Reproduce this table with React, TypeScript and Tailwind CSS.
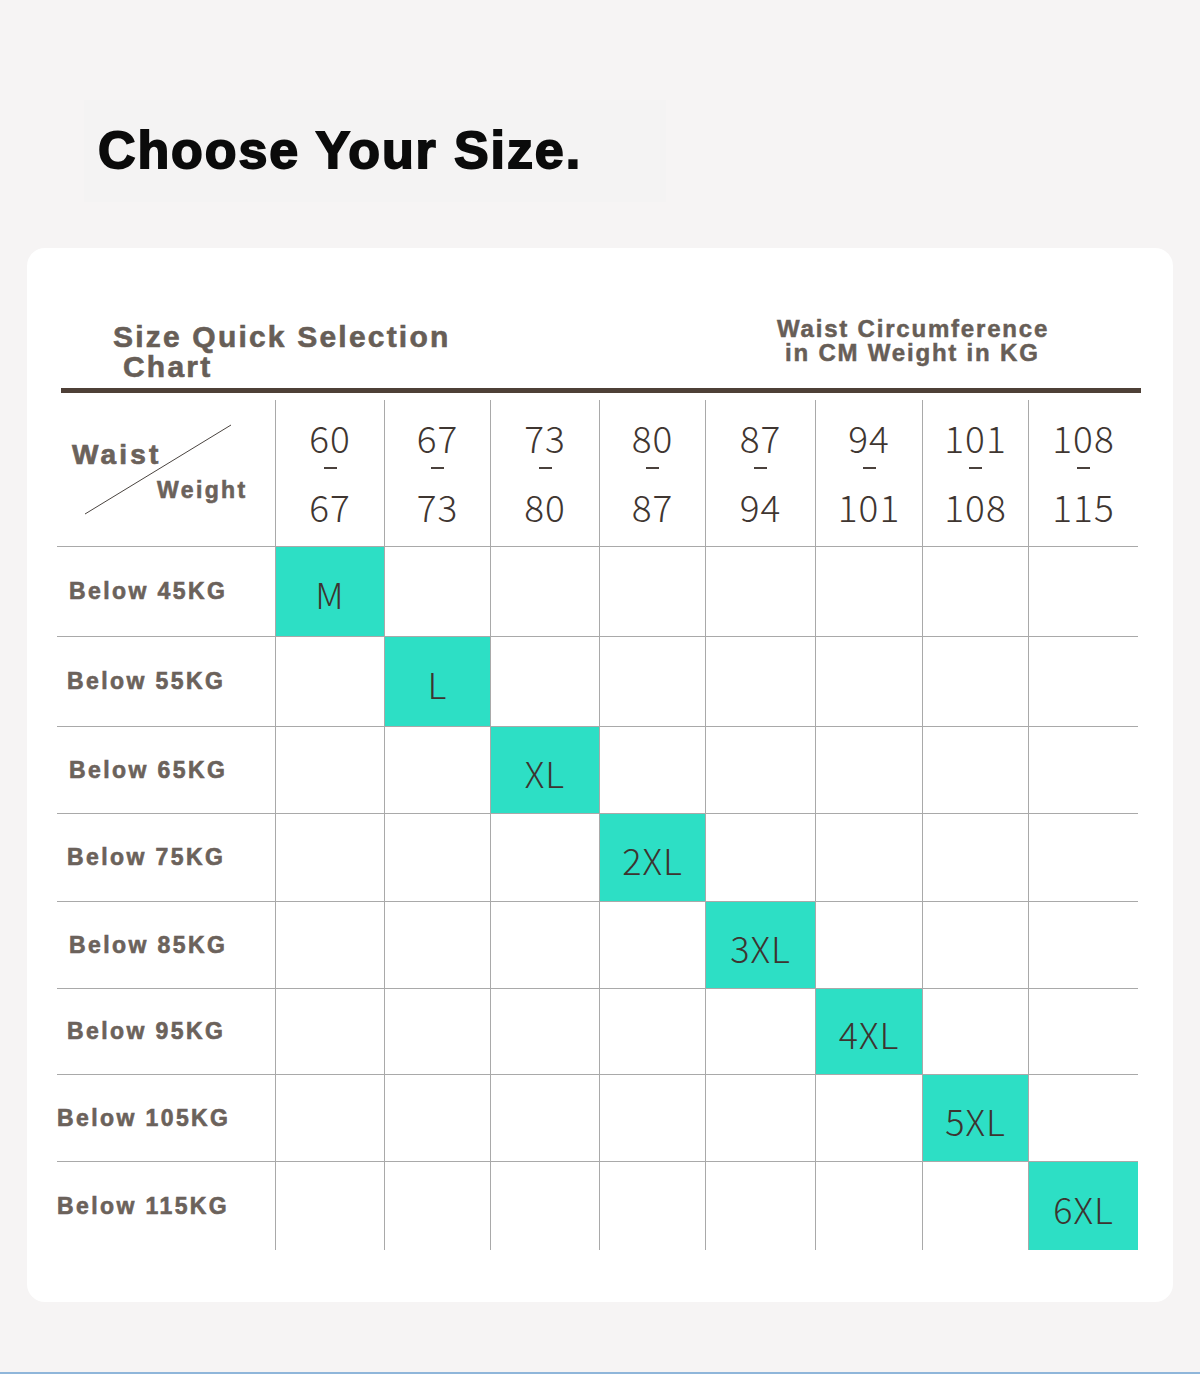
const cols = [
  { top: '60', bottom: '67' },
  { top: '67', bottom: '73' },
  { top: '73', bottom: '80' },
  { top: '80', bottom: '87' },
  { top: '87', bottom: '94' },
  { top: '94', bottom: '101' },
  { top: '101', bottom: '108' },
  { top: '108', bottom: '115' },
]

const rows = [
  { label: 'Below 45KG', size: 'M', h: 'h-[90px]', pl: 'pl-[12px]' },
  { label: 'Below 55KG', size: 'L', h: 'h-[90px]', pl: 'pl-[10px]' },
  { label: 'Below 65KG', size: 'XL', h: 'h-[87px]', pl: 'pl-[12px]' },
  { label: 'Below 75KG', size: '2XL', h: 'h-[88px]', pl: 'pl-[10px]' },
  { label: 'Below 85KG', size: '3XL', h: 'h-[87px]', pl: 'pl-[12px]' },
  { label: 'Below 95KG', size: '4XL', h: 'h-[86px]', pl: 'pl-[10px]' },
  { label: 'Below 105KG', size: '5XL', h: 'h-[87px]', pl: 'pl-0' },
  { label: 'Below 115KG', size: '6XL', h: 'h-[89px]', pl: 'pl-0' },
]

const colW = ['w-[109px]', 'w-[106px]', 'w-[109px]', 'w-[106px]', 'w-[110px]', 'w-[107px]', 'w-[106px]', 'w-[110px]']

const arial = "font-['Liberation_Sans',Arial,sans-serif]"
const thin = "font-['Noto_Sans_CJK_SC','Noto_Sans',sans-serif]"

export default function App() {
  return (
    <div className="h-[1374px] bg-[#f6f4f4] flex flex-col">
      <div className="pt-[100px] pl-[84px]">
        <div className="w-[582px] h-[102px] bg-[#f4f3f3] pl-[14px] pt-[24px]">
          <h1
            className={`${arial} text-[52px] leading-none font-bold tracking-[1.9px] text-[#0b0b0b] [-webkit-text-stroke:1.8px_#0b0b0b]`}
          >
            Choose Your Size.
          </h1>
        </div>
      </div>

      <div className="mt-[46px] ml-[27px] w-[1146px] h-[1054px] bg-white rounded-[18px]">
        {/* header */}
        <div className="pl-[34px]">
          <div className="flex items-start pt-[69px] pl-[52px]">
            <div
              className={`${arial} w-[664px] mt-[5px] text-[30px] leading-[30px] font-bold tracking-[2.2px] text-[#675e57] [-webkit-text-stroke:0.6px_#675e57]`}
            >
              <div>Size Quick Selection</div>
              <div className="pl-[10px]">Chart</div>
            </div>
            <div
              className={`${arial} text-[24px] leading-[24px] font-bold tracking-[1.8px] text-[#675e57] [-webkit-text-stroke:0.5px_#675e57]`}
            >
              <div>Waist Circumference</div>
              <div className="pl-[8px]">in CM Weight in KG</div>
            </div>
          </div>
          <div className="mt-[6px] w-[1080px] h-[5px] bg-[#4e4037]" />
        </div>

        {/* table */}
        <div className="ml-[30px] mt-[7px]">
          <div className="flex h-[146px]">
            <div className="w-[218px] relative pt-[41px]">
              <svg className="absolute left-0 top-0" width="218" height="146">
                <line x1="28" y1="114" x2="174" y2="25" stroke="#4a4440" strokeWidth="1" />
              </svg>
              <div
                className={`${arial} relative pl-[15px] text-[28px] leading-none font-bold tracking-[3.2px] text-[#6b625b] [-webkit-text-stroke:0.7px_#6b625b]`}
              >
                Waist
              </div>
              <div
                className={`${arial} relative mt-[10px] pl-[100px] text-[23px] leading-none font-bold tracking-[2.4px] text-[#6b625b] [-webkit-text-stroke:0.6px_#6b625b]`}
              >
                Weight
              </div>
            </div>
            {cols.map((c, i) => (
              <div
                key={i}
                className={`${colW[i]} border-l border-[#a9a9a9] flex flex-col items-center pt-[19px] ${thin} font-light text-[#3f3631]`}
              >
                <div className="text-[37px] leading-[36px] tracking-[1px]">{c.top}</div>
                <div className="mt-[12px] w-[13px] h-[2px] bg-[#4a413c]" />
                <div className="mt-[19px] text-[37px] leading-[36px] tracking-[1px]">{c.bottom}</div>
              </div>
            ))}
          </div>

          {rows.map((r, ri) => (
            <div key={ri} className={`flex ${r.h}`}>
              <div
                className={`w-[218px] border-t border-[#a9a9a9] flex items-center ${r.pl} ${arial} text-[23px] font-bold tracking-[2.4px] text-[#6b625b] [-webkit-text-stroke:0.6px_#6b625b]`}
              >
                {r.label}
              </div>
              {cols.map((_, ci) => (
                <div
                  key={ci}
                  className={`${colW[ci]} border-l border-t border-[#a9a9a9] flex items-center justify-center pt-[3px] ${
                    ci === ri ? 'bg-[#2ddfc5]' : 'bg-white'
                  } ${thin} font-light tracking-[1px] text-[36px] text-[#3d3430]`}
                >
                  {ci === ri ? r.size : null}
                </div>
              ))}
            </div>
          ))}
        </div>
      </div>

      <div className="flex-1" />
      <div className="h-[2px] bg-[#8fb6da]" />
    </div>
  )
}
